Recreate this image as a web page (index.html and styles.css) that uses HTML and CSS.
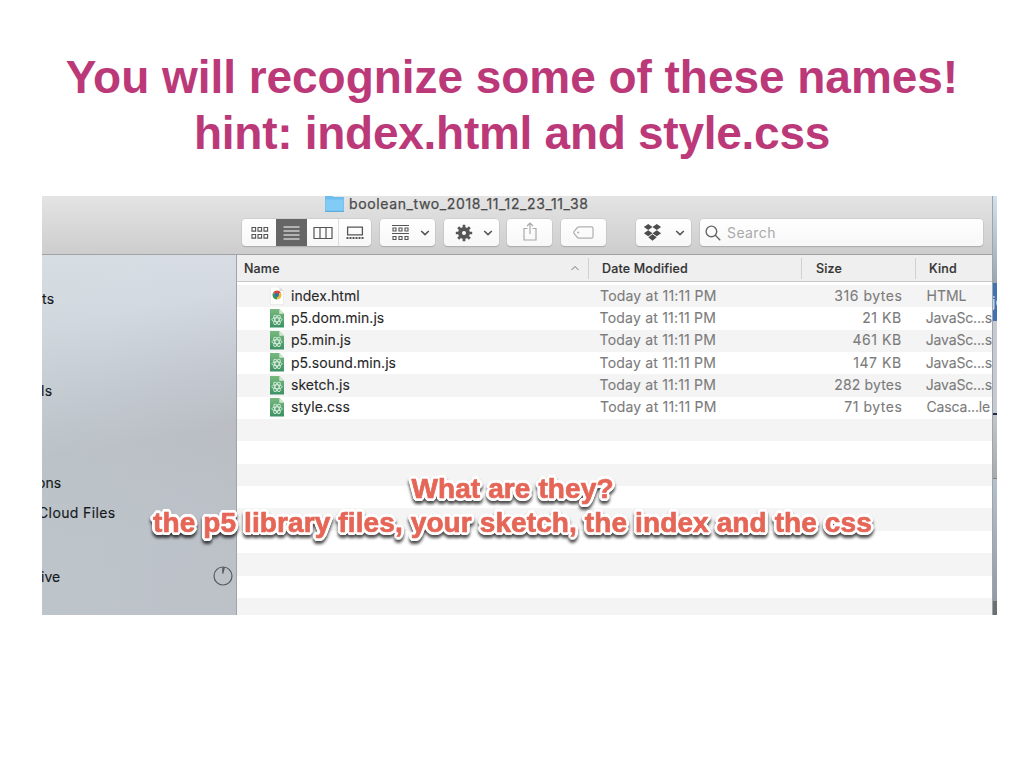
FILE: index.html
```html
<!DOCTYPE html>
<html lang="en">
<head>
<meta charset="utf-8">
<title>You will recognize some of these names!</title>
<link rel="stylesheet" href="styles.css">
</head>
<body>
<main class="slide">
  <h1 class="title"><span class="title-one">You will recognize some of these names!</span><br><span class="title-two">hint: index.html and style.css</span></h1>
  <section class="shot">
    <div class="finder">
      <header class="toolbar">
        <div class="folder-title">
          <svg class="folder" width="19" height="16" viewBox="0 0 19 16"><path d="M0 0H7L9 1H18Q19 1 19 2V15Q19 16 18 16H1Q0 16 0 15Z" fill="#6dbdf0"/><path d="M.5 3.5h18V15h-18z" fill="#82cbf7"/><path d="M0 15.3h19" stroke="#5ba8da"/></svg>
          <span>boolean_two_2018_11_12_23_11_38</span>
        </div>
        <div class="tools">
          <div class="segmented">
            <span class="seg seg-icon"><svg width="18" height="14" viewBox="0 0 18 14" fill="none" stroke="#555" stroke-width="1.1"><path d="M1 1.5h3.6v3.6H1zM7 1.5h3.6v3.6H7zM13 1.5h3.6v3.6H13zM1 8.5h3.6v3.6H1zM7 8.5h3.6v3.6H7zM13 8.5h3.6v3.6H13z"/></svg></span>
            <span class="seg seg-list"><svg width="18" height="14" viewBox="0 0 18 14" stroke="#fff" stroke-width="1.2"><path d="M.5 1h16M.5 5h16M.5 9h16M.5 13h16"/></svg></span>
            <span class="seg seg-cols"><svg width="20" height="14" viewBox="0 0 20 14" fill="none" stroke="#555" stroke-width="1.2"><path d="M1 1.5h18v11H1zM7 1.5v11M13 1.5v11"/></svg></span>
            <span class="seg seg-gallery"><svg width="18" height="14" viewBox="0 0 18 14" fill="none" stroke="#555" stroke-width="1.3"><path d="M1.6 1.2h14.8v7.6H1.6z"/><path d="M.5 12h17" stroke-width="2" stroke-dasharray="2 1"/></svg></span>
          </div>
          <div class="button group-button">
            <svg width="19" height="18" viewBox="0 0 19 18" fill="none" stroke="#555" stroke-width="1.1"><path d="M1 1.5h17M1 9.5h17"/><path d="M2 4h3v3H2zM8 4h3v3H8zM14 4h3v3h-3zM2 12.5h3v3H2zM8 12.5h3v3H8zM14 12.5h3v3h-3z"/></svg>
            <svg class="chevron" width="10" height="6" viewBox="0 0 10 6"><path d="M1.2 1L5 4.6 8.8 1"/></svg>
          </div>
          <div class="button gear-button">
            <svg width="18" height="18" viewBox="-9 -9 18 18" fill="none" stroke="#555"><circle r="4" stroke-width="4"/><path stroke-width="2.7" d="M0-5.2v-3M0 5.2v3M-5.2 0h-3M5.2 0h3M3.8-3.8l2-2M-3.8 3.8l-2 2M-3.8-3.8l-2-2M3.8 3.8l2 2"/></svg>
            <svg class="chevron" width="10" height="6" viewBox="0 0 10 6"><path d="M1.2 1L5 4.6 8.8 1"/></svg>
          </div>
          <div class="button share-button"><svg width="14" height="19" viewBox="0 0 14 19" fill="none" stroke="#aaa" stroke-width="1.2"><path d="M4.5 6.5H1V18h12V6.5H9.5M7 12V1M4 4l3-3 3 3"/></svg></div>
          <div class="button tag-button"><svg width="21" height="13" viewBox="0 0 21 13" fill="none" stroke="#b0b0b0" stroke-width="1.2"><path d="M6 .8h12.5q1.5 0 1.5 1.5v8.4q0 1.5-1.5 1.5H6Q5 12.200 4 11L1 7.500Q.3 6.500 1 5.500L4 2Q5 .8 6 .8Z"/><circle cx="5.200" cy="6.500" r=".5"/></svg></div>
          <div class="button dropbox-button">
            <svg width="19" height="18" viewBox="0 0 19 18" fill="#4c4c4c"><path d="M5.200 0l4.300 3-4.300 3-4.300-3zM13.800 0l4.300 3-4.300 3-4.300-3zM5.200 6.300l4.300 3-4.300 3-4.300-3zM13.800 6.300l4.300 3-4.300 3-4.300-3zM5.300 13.300l4.200-3 4.200 3-4.200 3.500z"/></svg>
            <svg class="chevron" width="10" height="6" viewBox="0 0 10 6"><path d="M1.200 1L5 4.600 8.800 1"/></svg>
          </div>
          <div class="search">
            <svg width="16" height="16" viewBox="0 0 16 16" fill="none" stroke="#666" stroke-width="1.400"><circle cx="6.400" cy="6.400" r="5.300"/><path d="M10.300 10.300l4.900 4.900"/></svg>
            <span>Search</span>
          </div>
        </div>
      </header>
      <div class="content">
        <nav class="sidebar">
          <span class="side side-ts">ts</span>
          <span class="side side-ls">ls</span>
          <span class="side side-ons"><span class="cut-ons">ons</span></span>
          <span class="side side-cloud"><span class="cut-cloud">Cloud Files</span></span>
          <span class="side side-ive"><span class="cut-ive">ive</span>
            <svg width="20" height="20" viewBox="0 0 20 20" fill="none" stroke="#555b60" stroke-width="1.200"><circle cx="10" cy="10" r="9"/><path d="M9.800 1v6.500L11.400 1.100"/></svg></span>
        </nav>
        <div class="list">
          <div class="columns">
            <span class="col-name">Name<svg width="10" height="6" viewBox="0 0 10 6" fill="none" stroke="#777"><path d="M1.500 5l3.500-3.500L8.500 5"/></svg></span>
            <span class="col-date">Date Modified</span>
            <span class="col-size">Size</span>
            <span class="col-kind">Kind</span>
          </div>
          <div class="rows">
            <div class="row"><svg class="file" width="16" height="18" viewBox="0 0 16 18"><path d="M1.500 0h9l4 4v13.500h-13z" fill="#fff" stroke="#e2e2e2" stroke-width=".6"/><path d="M10.500 0l4 4h-4z" fill="#ddd"/><path d="M8 8L4.100 5.700A4.500 4.500 0 0 1 11.900 5.700z" fill="#d8453a"/><path d="M8 8L4.100 5.700A4.500 4.500 0 0 0 8 12.500z" fill="#35985a"/><path d="M8 8l3.900-2.300A4.500 4.500 0 0 1 8 12.500z" fill="#edbd36"/><circle cx="8" cy="8" r="2" fill="#356bb5"/></svg><span class="name">index.html</span><span class="date">Today at 11:11 PM</span><span class="size">316 bytes</span><span class="kind kind-html">HTML</span></div>
            <div class="row"><svg class="file" width="16" height="19"><use href="#atom"/></svg><span class="name">p5.dom.min.js</span><span class="date">Today at 11:11 PM</span><span class="size">21 KB</span><span class="kind">JavaSc...s</span></div>
            <div class="row"><svg class="file" width="16" height="19"><use href="#atom"/></svg><span class="name">p5.min.js</span><span class="date">Today at 11:11 PM</span><span class="size">461 KB</span><span class="kind">JavaSc...s</span></div>
            <div class="row"><svg class="file" width="16" height="19"><use href="#atom"/></svg><span class="name">p5.sound.min.js</span><span class="date">Today at 11:11 PM</span><span class="size">147 KB</span><span class="kind">JavaSc...s</span></div>
            <div class="row"><svg class="file" width="16" height="19"><use href="#atom"/></svg><span class="name">sketch.js</span><span class="date">Today at 11:11 PM</span><span class="size size-tight">282 bytes</span><span class="kind">JavaSc...s</span></div>
            <div class="row"><svg class="file" width="16" height="19"><use href="#atom"/></svg><span class="name">style.css</span><span class="date">Today at 11:11 PM</span><span class="size">71 bytes</span><span class="kind">Casca...le</span></div>
          </div>
        </div>
      </div>
    </div>
    <aside class="behind"><div class="behind-sky"></div><div class="behind-blue">je</div><div class="behind-light"></div><div class="behind-gray"></div><div class="behind-steel"></div><div class="behind-dark"></div></aside>
    <p class="caption"><span class="cap-one">What are they?</span><br><span class="cap-two">the p5 library files, your sketch, the index and the css</span></p>
  </section>
</main>
<svg class="defs" width="0" height="0">
  <defs>
    <linearGradient id="green" x2="0" y2="1"><stop offset="0" stop-color="#78b97d"/><stop offset="1" stop-color="#3c9164"/></linearGradient>
    <symbol id="atom" viewBox="0 0 16 19"><path d="M1 0h9.500L15 4.700v13.700H1z" fill="url(#green)"/><path d="M10.300 0L15 4.700h-4.700z" fill="#d4e8d2"/><g fill="none" stroke="#d5ecda" stroke-width=".9"><ellipse cx="8" cy="10.800" rx="5.200" ry="2"/><ellipse cx="8" cy="10.800" rx="5.200" ry="2" transform="rotate(60 8 10.800)"/><ellipse cx="8" cy="10.800" rx="5.200" ry="2" transform="rotate(120 8 10.800)"/></g></symbol>
  </defs>
</svg>
</body>
</html>
```

FILE: styles.css
```css
* { box-sizing: border-box; }
body { margin: 0; background: #fff; overflow: hidden; }
svg { display: block; flex: none; }
.defs { position: absolute; }
.slide { width: 1024px; height: 768px; padding-top: 49px; }
.title { height: 147px; margin: 0; text-align: center; font: bold 46px/56px "Liberation Sans", Arial, sans-serif; color: #bc3979; white-space: nowrap; }
.title-one { letter-spacing: -.04px; }
.title-two { letter-spacing: -.27px; }
.shot { position: relative; display: flex; width: 955px; height: 418.500px; margin-left: 42px; overflow: hidden; font: 14px/22px Inter, sans-serif; }
.finder { width: 950px; height: 100%; display: flex; flex-direction: column; }
.toolbar { height: 59px; flex: none; background: linear-gradient(#e4e4e4, #cdcdcd); border-bottom: 1px solid #a2a2a2; }
.folder-title { display: flex; height: 23px; padding-left: 283px; color: #4b4b4b; align-items: flex-start; line-height: 16px; gap: 5px; letter-spacing: .62px; -webkit-text-stroke: .25px; }
.tools { display: flex; padding-left: 200px; height: 27px; }
.segmented, .button, .search { display: flex; height: 27px; border-radius: 4px; background: linear-gradient(#fff, #f7f7f7); box-shadow: 0 0 0 .5px #c2c2c2, 0 1px 1px #999; }
.segmented { width: 129px; margin-right: 9px; overflow: hidden; }
.seg { display: flex; align-items: center; justify-content: center; }
.seg-icon { width: 34px; padding-left: 1px; }
.seg-list { width: 31px; background: #666; }
.seg-cols { width: 32px; border-right: 1px solid #ddd; }
.seg-gallery { width: 32px; }
.button { width: 55px; align-items: center; }
.chevron { fill: none; stroke: #555; stroke-width: 1.600; }
.group-button { margin-right: 9px; padding-left: 11px; gap: 10px; }
.gear-button { margin-right: 8px; padding-left: 11px; gap: 10px; }
.share-button, .tag-button { width: 45px; justify-content: center; }
.share-button { margin-right: 9px; padding-bottom: 2px; }
.tag-button { margin-right: 30px; }
.dropbox-button { margin-right: 9px; padding-left: 7px; gap: 13px; }
.search { width: 283px; align-items: center; padding-left: 5px; gap: 6px; color: #aaa; letter-spacing: .4px; }
.content { display: flex; flex: 1; }
.sidebar { width: 195px; padding-top: 33px; border-right: 1px solid #9fa4ac; color: #161a1e; -webkit-text-stroke: .15px; background: linear-gradient(90deg, rgba(192,212,210,.2), rgba(205,207,230,0)), linear-gradient(170deg, #dbe0e6 0, #d4d9e1 18%, #c3c7cf 38%, #babec4 52%, #bcc1c8 75%, #bdc1c8 100%); }
.side { display: flex; height: 22px; white-space: nowrap; overflow: hidden; }
.side-ts { margin-bottom: 70px; letter-spacing: .3px; }
.side-ls { margin-bottom: 70px; text-indent: -1px; letter-spacing: .3px; }
.side-ons { margin-bottom: 8px; }
.cut-ons { margin-left: -5px; }
.side-cloud { margin-bottom: 42px; letter-spacing: .38px; }
.cut-cloud { margin-left: -4px; }
.side-ive { justify-content: space-between; padding-right: 3px; }
.cut-ive { margin-left: -1px; }
.list { width: 755px; }
.columns { display: flex; height: 27px; align-items: center; border-bottom: 1px solid #c9c9c9; background: #efefef; color: #333; font-size: 12.500px; font-weight: 500; letter-spacing: .16px; -webkit-text-stroke: .15px; }
.columns > span { height: 21px; line-height: 21px; border-right: 1px solid #d1d1d1; }
.columns .col-name { display: flex; justify-content: space-between; align-items: center; width: 352px; padding: 0 8px 0 7px; }
.columns .col-date { width: 213px; padding-left: 13px; }
.columns .col-size { width: 114px; padding-left: 14px; }
.columns .col-kind { padding-left: 13px; border: 0; }
.rows { height: 333px; padding-top: 2.500px; background: repeating-linear-gradient(#f4f4f4 0, #f4f4f4 22.350px, #fff 22.350px, #fff 44.700px) 0 2.500px no-repeat; }
.row { display: flex; align-items: center; height: 22.350px; white-space: nowrap; color: #7b7b7b; -webkit-text-stroke: .1px; }
.file { margin: 0 6px 0 32px; }
.name { width: 309px; color: #262626; letter-spacing: .04px; }
.date { width: 182px; letter-spacing: .2px; }
.size { width: 120.500px; text-align: right; letter-spacing: .55px; }
.size-tight { letter-spacing: .15px; }
.kind { margin-left: 24px; letter-spacing: -.15px; }
.kind-html { letter-spacing: 0; }
.behind { display: flex; flex-direction: column; width: 5px; border-left: 1px solid #9ba5af; color: #dce8f5; overflow: hidden; }
.behind div { flex: none; }
.behind-sky { height: 87px; background: linear-gradient(#d4e0ec, #9ca6ae); }
.behind-blue { height: 38px; background: #4273b0; line-height: 38px; text-indent: -1px; }
.behind-light { height: 94px; background: #c8cad1; border-bottom: 2px solid #1e2b4c; }
.behind-gray { height: 64px; background: linear-gradient(#c5c5c5, #aaa); border-bottom: 1px solid #808080; }
.behind-steel { height: 122px; background: linear-gradient(#b6c0c8, #929ba3); }
.behind-dark { height: 14px; background: #6c7072; }
.caption { position: absolute; left: 0; top: 276px; width: 941px; margin: 0; text-align: center; font: bold 28px/34px "Liberation Sans", Arial, sans-serif; letter-spacing: .11px; color: #e56657; white-space: nowrap; -webkit-text-stroke: .7px #e56657; text-shadow: 3px 0 #fff, -3px 0 #fff, 0 3px #fff, 0 -3px #fff, 2.800px 1.200px #fff, 2.800px -1.200px #fff, -2.800px 1.200px #fff, -2.800px -1.200px #fff, 2.100px 2.100px #fff, 2.100px -2.100px #fff, -2.100px 2.100px #fff, -2.100px -2.100px #fff, 1.200px 2.800px #fff, -1.200px 2.800px #fff, 1.200px -2.800px #fff, -1.200px -2.800px #fff; filter: drop-shadow(0 3px 1.500px rgba(0,0,0,.7)); }
```
